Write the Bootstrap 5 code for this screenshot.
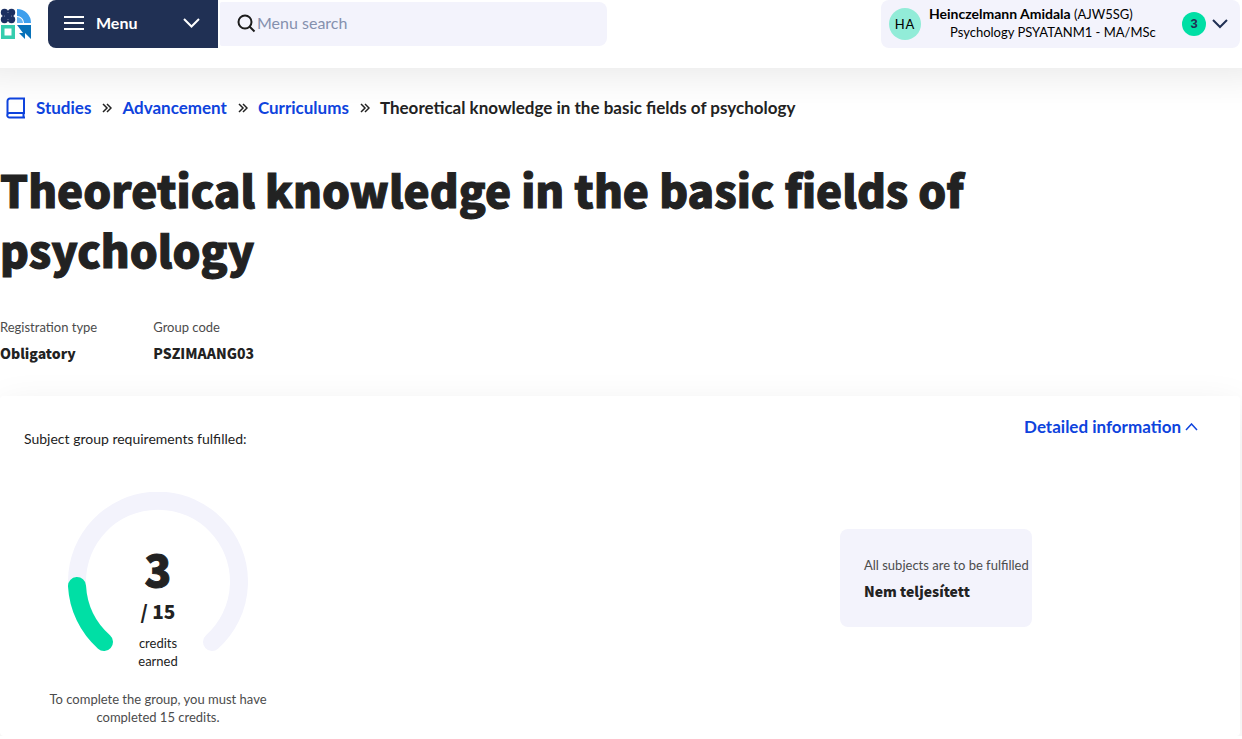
<!DOCTYPE html>
<html lang="en">
<head>
<meta charset="utf-8">
<meta name="viewport" content="width=device-width, initial-scale=1">
<title>Theoretical knowledge in the basic fields of psychology</title>
<link href="https://cdn.jsdelivr.net/npm/bootstrap@5.3.0/dist/css/bootstrap.min.css" rel="stylesheet">
<style>
  :root { --navy: #203054; --lavender: #f3f3fc; --link: #0e43dd; --green: #00dfa5; --ink: #222; }
  body { font-family: Lato, "Liberation Sans", sans-serif; font-size: 14px; line-height: 18px; color: var(--ink); background: #fff; overflow-x: hidden; }
  svg { display: block; flex: none; }
  a { color: var(--link); }
  .heavy { font-family: "Noto Sans CJK SC", "Noto Sans", sans-serif; font-weight: 900; }
  .app-header { height: 68px; box-shadow: 0 -32px 48px 32px rgba(0, 0, 0, .12); background: #fff; }
  .logo { margin-top: 8px; width: 48px; }
  .menu-btn { width: 170px; height: 48px; padding: 0 18px 2px 16px; background: var(--navy); color: #fff; border: 0; border-radius: 8px 0 0 8px; font-size: 16px; font-weight: 700; }
  .search-box { width: 387px; height: 44px; margin: 2px 0 0 2px; padding-left: 17px; border-radius: 2px 8px 8px 2px; background: var(--lavender); }
  .search-box input { font-size: 16px; line-height: 20px; padding: 0 0 2px; }
  .search-box input::placeholder { color: #8590ae; opacity: 1; }
  .user-btn { width: 359px; height: 48px; margin-right: 2px; padding: 0 12px 0 8px; border: 0; border-radius: 8px; background: var(--lavender); color: #000; font-size: 13px; }
  .user-name { font-size: 14px; }
  .user-text { padding-bottom: 2px; }
  .user-role { padding-left: 21px; }
  .avatar { width: 32px; height: 32px; background: #92ecd8; letter-spacing: 1px; }
  .counter { width: 24px; height: 24px; margin-right: 6px; background: var(--green); color: var(--navy); font-family: "Liberation Sans", sans-serif; font-weight: 700; }
  .crumbs { padding: 29px 0 0 6px; font-size: 17px; line-height: 22px; font-weight: 700; }
  .crumbs .breadcrumb-item + .breadcrumb-item { padding-left: 10px; }
  .crumbs .breadcrumb-item + .crumb-sep { padding-left: 11px; }
  .crumbs .breadcrumb-item + .breadcrumb-item::before { content: none; }
  .page-title { margin: 40px 0 0; max-width: 1080px; font-size: 44px; line-height: 60px; -webkit-text-stroke: 1px var(--ink); }
  .facts { margin: 39px 0 0; gap: 56px; }
  .caption { font-size: 13px; line-height: 18px; color: #4c4c4c; font-weight: 400; }
  .fact-value { font-size: 14px; line-height: 18px; margin: 8px 0 0; }
  .panel { margin: 34px 2px 0 0; padding: 22px 42px 10px 24px; border-radius: 4px; background: #fff; box-shadow: 0 12px 40px rgba(0, 0, 0, .09); }
  .toggle-link { font-size: 17px; line-height: 18px; font-weight: 700; }
  .panel-lead { margin: 12px 0 44px; }
  .gauge-col { width: 268px; }
  .gauge { width: 180px; height: 180px; }
  .gauge-text { inset: 52px 0 auto; }
  .gauge-value { font-size: 44px; line-height: 48px; -webkit-text-stroke: 1px var(--ink); }
  .gauge-total { font-size: 19px; line-height: 24px; margin: 7px 0 11px; }
  .note { width: 224px; margin-top: 18px; }
  .status { width: 192px; height: 98px; margin: 37px 166px 0 0; padding: 27px 0 0 24px; border-radius: 8px; background: var(--lavender); white-space: nowrap; }
</style>
</head>
<body>
<header class="app-header d-flex align-items-start">
  <a class="logo flex-shrink-0" href="#" aria-label="Home">
    <svg width="32" height="32" viewBox="0 0 32 32">
      <g fill="#1c2f61"><circle cx="4.500" cy="4.500" r="3.700"/><circle cx="11.500" cy="4.500" r="3.700"/><circle cx="4.500" cy="11.500" r="3.700"/><circle cx="11.500" cy="11.500" r="3.700"/><path d="M4 4h8v8H4z"/></g>
      <g fill="#8791ad"><circle cx="8" cy="4.500" r=".6"/><circle cx="8" cy="11.500" r=".6"/><circle cx="4.500" cy="8" r=".6"/><circle cx="11.500" cy="8" r=".6"/></g>
      <path d="M17 1a14 14 0 0 1 14 14h-7a7 7 0 0 0-7-7z" fill="#3e9fed"/><path d="M17 9a6 6 0 0 1 6 6h-6z" fill="#66b4f2"/>
      <path d="M1 17h14v14H1zM4.500 20.500v7h7v-7z" fill="#35cdae" fill-rule="evenodd"/>
      <path d="M17 17h14v14l-6-6v6l-6-6h4z" fill="#0872b9"/>
    </svg>
  </a>
  <button class="menu-btn d-flex align-items-center flex-shrink-0" type="button">
    <svg width="20" height="14" stroke="#fff" stroke-width="2"><path d="M0 1h20M0 7h20M0 13h20"/></svg>
    <span class="ms-2 ps-1">Menu</span>
    <svg class="ms-auto" width="17" height="10" viewBox="0 0 17 10" fill="none" stroke="#fff" stroke-width="2"><path d="M1 1l7.500 7.500L16 1"/></svg>
  </button>
  <label class="search-box d-flex align-items-center">
    <svg width="20" height="20" fill="none" stroke="#1c1c1c" stroke-width="2"><circle cx="8" cy="8" r="6.500"/><path d="M12.500 12.500l5 5"/></svg>
    <input class="form-control border-0 bg-transparent shadow-none" type="text" placeholder="Menu search" aria-label="Menu search">
  </label>
  <button class="user-btn d-flex align-items-center ms-auto flex-shrink-0" type="button">
    <span class="avatar rounded-circle d-flex align-items-center justify-content-center">HA</span>
    <span class="user-text ms-2 text-start"><span class="d-block"><b class="user-name">Heinczelmann Amidala</b> (AJW5SG)</span><span class="user-role d-block">Psychology PSYATANM1 - MA/MSc</span></span>
    <span class="counter rounded-circle d-flex align-items-center justify-content-center ms-auto">3</span>
    <svg width="16" height="10" viewBox="0 0 16 10" fill="none" stroke="#203054" stroke-width="2"><path d="M1 1l7 7 7-7"/></svg>
  </button>
</header>
<main>
  <nav class="crumbs" aria-label="breadcrumb">
    <ol class="breadcrumb align-items-center m-0">
      <li class="breadcrumb-item d-flex align-items-center"><svg class="me-2" width="22" height="22" fill="none" stroke="#0e43dd" stroke-width="2"><path d="M1.500 18V4a2.500 2.500 0 0 1 2.500-2.500h14V16H3.500a2.200 2.200 0 0 0 0 4.500H19M17.500 16v4.500"/></svg><a class="text-decoration-none" href="#">Studies</a></li>
      <li class="breadcrumb-item crumb-sep" aria-hidden="true"><svg width="10" height="10" fill="none" stroke="#222" stroke-width="1.500"><path d="M1 1l4 4-4 4M5 1l4 4-4 4"/></svg></li>
      <li class="breadcrumb-item"><a class="text-decoration-none" href="#">Advancement</a></li>
      <li class="breadcrumb-item crumb-sep" aria-hidden="true"><svg width="10" height="10" fill="none" stroke="#222" stroke-width="1.500"><path d="M1 1l4 4-4 4M5 1l4 4-4 4"/></svg></li>
      <li class="breadcrumb-item"><a class="text-decoration-none" href="#">Curriculums</a></li>
      <li class="breadcrumb-item crumb-sep" aria-hidden="true"><svg width="10" height="10" fill="none" stroke="#222" stroke-width="1.500"><path d="M1 1l4 4-4 4M5 1l4 4-4 4"/></svg></li>
      <li class="breadcrumb-item text-reset" aria-current="page">Theoretical knowledge in the basic fields of psychology</li>
    </ol>
  </nav>
  <h1 class="page-title heavy">Theoretical knowledge in the basic fields of psychology</h1>
  <dl class="facts d-flex">
    <div><dt class="caption">Registration type</dt><dd class="fact-value heavy">Obligatory</dd></div>
    <div><dt class="caption">Group code</dt><dd class="fact-value heavy">PSZIMAANG03</dd></div>
  </dl>
  <section class="panel">
    <div class="d-flex justify-content-between align-items-start">
      <p class="panel-lead">Subject group requirements fulfilled:</p>
      <a class="toggle-link d-flex align-items-center text-decoration-none" href="#">Detailed information<svg class="ms-1" width="13" height="8" viewBox="0 0 13 8" fill="none" stroke="#0e43dd" stroke-width="1.500"><path d="M1 7l5.500-6L12 7"/></svg></a>
    </div>
    <div class="d-flex justify-content-between align-items-start">
      <div class="gauge-col d-flex flex-column align-items-center text-center">
        <div class="gauge position-relative">
          <svg width="180" height="180" fill="none" stroke-width="18" stroke-linecap="round">
            <path d="M36 150A81 81 0 1 1 144 150" stroke="#f3f3fc"/><path d="M36 150A81 81 0 0 1 9 94" stroke="#00dfa5"/>
          </svg>
          <div class="gauge-text position-absolute">
            <div class="gauge-value heavy">3</div>
            <div class="gauge-total heavy">/ 15</div>
            <div class="caption text-reset">credits<br>earned</div>
          </div>
        </div>
        <p class="note caption mb-0">To complete the group, you must have completed 15 credits.</p>
      </div>
      <div class="status">
        <div class="caption">All subjects are to be fulfilled</div>
        <div class="fact-value heavy">Nem teljesített</div>
      </div>
    </div>
  </section>
</main>
<script src="https://cdn.jsdelivr.net/npm/bootstrap@5.3.0/dist/js/bootstrap.bundle.min.js"></script>
</body>
</html>
